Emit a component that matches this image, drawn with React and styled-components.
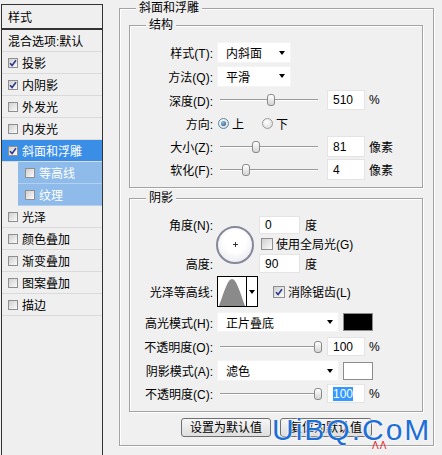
import React from "react";
import styled, { createGlobalStyle, css } from "styled-components";

const GlobalStyle = createGlobalStyle`
  html, body {
    margin: 0;
    padding: 0;
    background: #f0f0f0;
  }
  body {
    font-family: "Liberation Sans", "Noto Sans CJK SC", sans-serif;
    font-size: 12px;
    color: #000;
  }
`;

const Dialog = styled.div`
  display: flex;
  position: relative;
  width: 442px;
  height: 455px;
  overflow: hidden;
  background: #f0f0f0;
`;

/* left list of effects */
const Sidebar = styled.div`
  width: 103px;
  flex-shrink: 0;
  display: flex;
  flex-direction: column;
  padding: 4px 0 0 1px;
  box-sizing: border-box;
`;

const SideHeader = styled.div`
  height: 25px;
  border: 1px solid #333;
  box-sizing: border-box;
  display: flex;
  align-items: center;
  padding-left: 6px;
  background: #efefef;
`;

const SideList = styled.div`
  flex: 1;
  border: 1px solid #333;
  border-bottom: none;
  background: #efefef;
`;

const LayerRow = styled.div`
  display: flex;
  align-items: center;
  gap: 4px;
  height: 21px;
  border-bottom: 1px solid ${(p) => (p.$sub ? "#b4d0ee" : "#dadada")};
  margin-left: ${(p) => (p.$sub ? 16 : 0)}px;
  padding-left: ${(p) => (p.$sub ? 7 : 6)}px;
  background: ${(p) => (p.$active ? "#3a8ee6" : p.$sub ? "#8ebbe9" : "transparent")};
  color: ${(p) => (p.$active || p.$sub ? "#fff" : "#000")};
  white-space: nowrap;
`;

const Box = styled.span`
  display: inline-flex;
  align-items: center;
  justify-content: center;
  flex-shrink: 0;
  width: ${(p) => p.$size}px;
  height: ${(p) => p.$size}px;
  box-sizing: border-box;
  border: 1px solid #8f8f8f;
  background: linear-gradient(135deg, #cfcfcf, #fbfbfb);
  margin-left: ${(p) => p.$ml || 0}px;
`;

/* right panel */
const Main = styled.div`
  flex: 1;
  padding: 8px 0 0 16px;
`;

const GroupBox = styled.div`
  display: flex;
  flex-direction: column;
  box-sizing: border-box;
  width: ${(p) => p.$w}px;
  height: ${(p) => p.$h}px;
  margin: ${(p) => p.$m || "0"};
  border: 1px solid #a3a3a3;
  box-shadow: inset 1px 1px 0 #fff, 1px 1px 0 #fff;
`;

const GroupTitle = styled.div`
  align-self: flex-start;
  height: 16px;
  line-height: 16px;
  margin: -9px 0 0 16px;
  padding: 0 3px;
  background: #f0f0f0;
`;

const Row = styled.div`
  display: flex;
  align-items: center;
  height: ${(p) => p.$h}px;
  margin-top: ${(p) => p.$mt || 0}px;
  flex-shrink: 0;
`;

const Label = styled.div`
  width: 83px;
  flex-shrink: 0;
  text-align: right;
  white-space: nowrap;
  margin-right: 4px;
`;

const Select = styled.div`
  width: ${(p) => p.$w}px;
  height: ${(p) => p.$h}px;
  box-sizing: border-box;
  display: flex;
  align-items: center;
  justify-content: space-between;
  padding: 0 5px 0 8px;
  background: #fff;
  border: 1px solid #f4f4f4;
`;

const Arrow = styled.span`
  width: 0;
  height: 0;
  border-left: 3.5px solid transparent;
  border-right: 3.5px solid transparent;
  border-top: 4px solid #000;
`;

const SliderWrap = styled.div`
  position: relative;
  width: 106px;
  height: 16px;
  flex-shrink: 0;
`;

const Track = styled.div`
  margin: 7px 5px 0 3px;
  height: 1px;
  background: #9a9a9a;
  border-bottom: 1px solid #fff;
`;

const Thumb = styled.div`
  position: absolute;
  top: 2px;
  width: 8px;
  height: 12px;
  box-sizing: border-box;
  border: 1px solid #8a8a8a;
  border-radius: 3px;
  background: linear-gradient(#ffffff, #d4d4d4);
`;

const Field = styled.div`
  width: ${(p) => p.$w}px;
  height: ${(p) => p.$h}px;
  margin-left: ${(p) => p.$ml || 0}px;
  box-sizing: border-box;
  display: flex;
  align-items: center;
  padding-left: 5px;
  background: #fff;
  border: 1px solid #e4e4e4;
`;

const Selected = styled.span`
  background: #3399ff;
  color: #fff;
`;

const Unit = styled.span`
  margin-left: ${(p) => p.$ml || 4}px;
  white-space: nowrap;
`;

const Radio = styled.span`
  display: inline-flex;
  align-items: center;
  justify-content: center;
  width: 11px;
  height: 11px;
  box-sizing: border-box;
  border-radius: 50%;
  border: 1px solid ${(p) => (p.$on ? "#5c86a8" : "#9a9a9a")};
  background: radial-gradient(circle at 40% 35%, #fff, #d6d6d6);
  margin-left: ${(p) => p.$ml || 0}px;
  ${(p) =>
    p.$on &&
    css`
      &::after {
        content: "";
        width: 5px;
        height: 5px;
        border-radius: 50%;
        background: radial-gradient(circle at 40% 35%, #8cc2e6, #17466e);
      }
    `}
`;

const AngleGrid = styled.div`
  display: grid;
  grid-template-columns: 87px 42px 1fr;
  grid-template-rows: 19px 19px 21px;
  align-items: center;
  margin-top: 9px;
`;

const AngleDial = styled.div`
  grid-column: 2;
  grid-row: 1 / 4;
  width: 38px;
  height: 38px;
  box-sizing: border-box;
  margin-left: -1px;
  border-radius: 50%;
  border: 2px solid #85889a;
  background: radial-gradient(circle at 50% 40%, #ffffff 40%, #e2e2ea);
  display: flex;
  align-items: center;
  justify-content: center;
`;

const Cell = styled.div`
  grid-column: ${(p) => p.$col};
  grid-row: ${(p) => p.$row};
  display: flex;
  align-items: center;
  white-space: nowrap;
  justify-content: ${(p) => (p.$right ? "flex-end" : "flex-start")};
  padding-right: ${(p) => (p.$right ? 4 : 0)}px;
`;

const Contour = styled.div`
  display: flex;
  height: 31px;
`;

const ContourThumb = styled.div`
  width: 30px;
  height: 31px;
  box-sizing: border-box;
  border: 1px solid #000;
  background: #fff;
`;

const ContourArrow = styled.div`
  width: 11px;
  height: 31px;
  box-sizing: border-box;
  border: 1px solid #000;
  border-left: none;
  background: #fff;
  display: flex;
  align-items: center;
  justify-content: center;
`;

const Swatch = styled.div`
  width: 30px;
  height: 18px;
  margin-left: 4px;
  box-sizing: border-box;
  border: 1px solid #8c8c8c;
  background: ${(p) => p.$color};
`;

const Buttons = styled.div`
  display: flex;
  justify-content: center;
  gap: 9px;
  margin-top: 6px;
`;

const Button = styled.button`
  width: ${(p) => p.$w}px;
  height: 19px;
  padding: 0;
  box-sizing: border-box;
  border: 1px solid #707070;
  border-radius: 3px;
  background: linear-gradient(#f6f6f6, #dedede);
  font-family: "Liberation Sans", "Noto Sans CJK SC", sans-serif;
  font-size: 12px;
  line-height: 16px;
  color: #000;
`;

/* site watermark lying over the buttons */
const Watermark = styled.div`
  position: absolute;
  left: 272px;
  top: 415px;
  font-family: "Liberation Sans", sans-serif;
  font-size: 30px;
  line-height: 30px;
  letter-spacing: 2px;
  color: #1d6fd6;
  text-shadow: 0 0 2px #fff, 0 0 2px #fff;
  white-space: nowrap;
`;

const WaterMarks = styled.div`
  position: absolute;
  left: 372px;
  top: 441px;
  font-family: "Liberation Sans", sans-serif;
  font-size: 10px;
  line-height: 10px;
  letter-spacing: 1px;
  color: #e0262a;
`;

const layers = [
  { label: "投影", checked: true },
  { label: "内阴影", checked: true },
  { label: "外发光" },
  { label: "内发光" },
  { label: "斜面和浮雕", checked: true, active: true },
  { label: "等高线", sub: true },
  { label: "纹理", sub: true },
  { label: "光泽" },
  { label: "颜色叠加" },
  { label: "渐变叠加" },
  { label: "图案叠加" },
  { label: "描边" },
];

const Tick = () => (
  <svg width="8" height="8" viewBox="0 0 8 8">
    <path d="M1 4.2 L3.1 6.4 L7 1.3" stroke="#2c3a8e" strokeWidth="1.6" fill="none" />
  </svg>
);

const CheckBox = ({ checked, size = 10, ml }) => (
  <Box $size={size} $ml={ml}>{checked && <Tick />}</Box>
);

const Slider = ({ pct }) => (
  <SliderWrap>
    <Track />
    <Thumb style={{ left: 3 + pct * 98 - 4 }} />
  </SliderWrap>
);

function App() {
  return (
    <>
      <GlobalStyle />
      <Dialog>
        <Sidebar>
          <SideHeader>样式</SideHeader>
          <SideList>
            <LayerRow>混合选项:默认</LayerRow>
            {layers.map((l) => (
              <LayerRow key={l.label} $active={l.active} $sub={l.sub}>
                <CheckBox checked={l.checked} />
                {l.label}
              </LayerRow>
            ))}
          </SideList>
        </Sidebar>

        <Main>
          <GroupBox $w={315} $h={438}>
            <GroupTitle>斜面和浮雕</GroupTitle>

            <GroupBox $w={294} $h={163} $m="9px 0 0 9px">
              <GroupTitle>结构</GroupTitle>
              <Row $h={23} $mt={8}>
                <Label>样式(T):</Label>
                <Select $w={74} $h={21}>
                  内斜面
                  <Arrow />
                </Select>
              </Row>
              <Row $h={24}>
                <Label>方法(Q):</Label>
                <Select $w={74} $h={21}>
                  平滑
                  <Arrow />
                </Select>
              </Row>
              <Row $h={24}>
                <Label>深度(D):</Label>
                <Slider pct={0.52} />
                <Field $w={38} $h={20} $ml={4}>510</Field>
                <Unit>%</Unit>
              </Row>
              <Row $h={23}>
                <Label>方向:</Label>
                <Radio $on $ml={1} />
                <Unit $ml={3}>上</Unit>
                <Radio $ml={18} />
                <Unit $ml={3}>下</Unit>
              </Row>
              <Row $h={23}>
                <Label>大小(Z):</Label>
                <Slider pct={0.37} />
                <Field $w={38} $h={21} $ml={4}>81</Field>
                <Unit>像素</Unit>
              </Row>
              <Row $h={23}>
                <Label>软化(F):</Label>
                <Slider pct={0.27} />
                <Field $w={38} $h={21} $ml={4}>4</Field>
                <Unit>像素</Unit>
              </Row>
            </GroupBox>

            <GroupBox $w={294} $h={214} $m="10px 0 0 9px">
              <GroupTitle>阴影</GroupTitle>
              <AngleGrid>
                <Cell $col={1} $row={1} $right>角度(N):</Cell>
                <Cell $col={1} $row={3} $right>高度:</Cell>
                <AngleDial>
                  <svg width="5" height="5" viewBox="0 0 5 5">
                    <path d="M2.5 0 V5 M0 2.5 H5" stroke="#333" strokeWidth="1" />
                  </svg>
                </AngleDial>
                <Cell $col={3} $row={1}>
                  <Field $w={41} $h={18}>0</Field>
                  <Unit $ml={5}>度</Unit>
                </Cell>
                <Cell $col={3} $row={2}>
                  <CheckBox size={12} ml={2} />
                  <Unit $ml={3}>使用全局光(G)</Unit>
                </Cell>
                <Cell $col={3} $row={3}>
                  <Field $w={41} $h={19}>90</Field>
                  <Unit $ml={5}>度</Unit>
                </Cell>
              </AngleGrid>
              <Row $h={35}>
                <Label>光泽等高线:</Label>
                <Contour>
                  <ContourThumb>
                    <svg width="28" height="29" viewBox="0 0 28 29">
                      <path d="M1 29 C7 12 10 2 14 2 C18 2 21 12 27 29 Z" fill="#8a8a8a" />
                    </svg>
                  </ContourThumb>
                  <ContourArrow>
                    <Arrow />
                  </ContourArrow>
                </Contour>
                <CheckBox checked size={12} ml={15} />
                <Unit $ml={3}>消除锯齿(L)</Unit>
              </Row>
              <Row $h={26}>
                <Label>高光模式(H):</Label>
                <Select $w={122} $h={20}>
                  正片叠底
                  <Arrow />
                </Select>
                <Swatch $color="#000" />
              </Row>
              <Row $h={23}>
                <Label>不透明度(O):</Label>
                <Slider pct={1} />
                <Field $w={38} $h={19} $ml={4}>100</Field>
                <Unit>%</Unit>
              </Row>
              <Row $h={25}>
                <Label>阴影模式(A):</Label>
                <Select $w={122} $h={21}>
                  滤色
                  <Arrow />
                </Select>
                <Swatch $color="#fff" />
              </Row>
              <Row $h={21}>
                <Label>不透明度(C):</Label>
                <Slider pct={1} />
                <Field $w={38} $h={19} $ml={4}>
                  <Selected>100</Selected>
                </Field>
                <Unit>%</Unit>
              </Row>
            </GroupBox>

            <Buttons>
              <Button $w={90}>设置为默认值</Button>
              <Button $w={92}>复位为默认值</Button>
            </Buttons>
          </GroupBox>
        </Main>

        <Watermark>UiBQ.CoM</Watermark>
        <WaterMarks>ΛΛ</WaterMarks>
      </Dialog>
    </>
  );
}

export default App;
